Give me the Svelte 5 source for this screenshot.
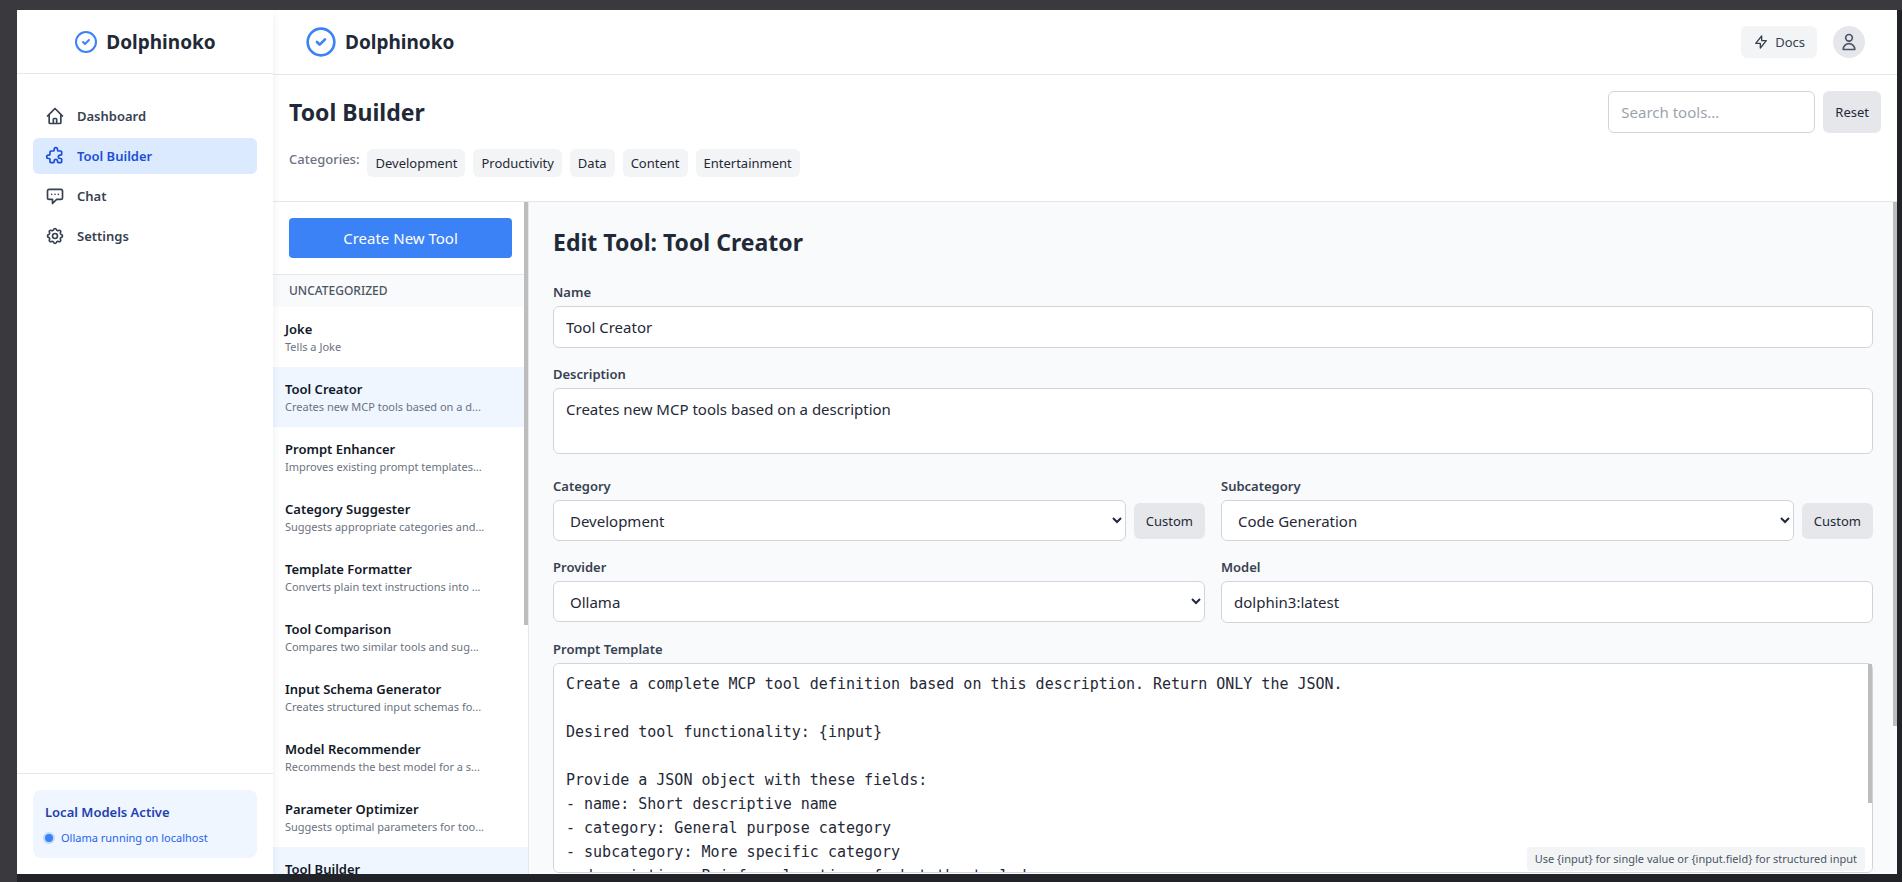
<script>
  const navItems = [
    { label: 'Dashboard', icon: 'home' },
    { label: 'Tool Builder', icon: 'puzzle' },
    { label: 'Chat', icon: 'chat' },
    { label: 'Settings', icon: 'gear' },
  ];
  const categories = ['Development', 'Productivity', 'Data', 'Content', 'Entertainment'];
  const tools = [
    { name: 'Joke', summary: 'Tells a Joke' },
    { name: 'Tool Creator', summary: 'Creates new MCP tools based on a d...' },
    { name: 'Prompt Enhancer', summary: 'Improves existing prompt templates...' },
    { name: 'Category Suggester', summary: 'Suggests appropriate categories and...' },
    { name: 'Template Formatter', summary: 'Converts plain text instructions into ...' },
    { name: 'Tool Comparison', summary: 'Compares two similar tools and sug...' },
    { name: 'Input Schema Generator', summary: 'Creates structured input schemas fo...' },
    { name: 'Model Recommender', summary: 'Recommends the best model for a s...' },
    { name: 'Parameter Optimizer', summary: 'Suggests optimal parameters for too...' },
    { name: 'Tool Builder', summary: '' },
  ];
  let activeNav = $state('Tool Builder');
  let selected = $state('Tool Creator');
  let search = $state('');
  let name = $state('Tool Creator');
  let description = $state('Creates new MCP tools based on a description');
  let category = $state('Development');
  let subcategory = $state('Code Generation');
  let provider = $state('Ollama');
  let model = $state('dolphin3:latest');
  let prompt = $state(
    'Create a complete MCP tool definition based on this description. Return ONLY the JSON.\n\nDesired tool functionality: {input}\n\nProvide a JSON object with these fields:\n- name: Short descriptive name\n- category: General purpose category\n- subcategory: More specific category\n- description: Brief explanation of what the tool does'
  );
  const hint = 'Use {input} for single value or {input.field} for structured input';
</script>

{#snippet mark(size)}
  <svg class="mark" width={size} height={size} viewBox="0 0 24 24" aria-hidden="true">
    <circle cx="12" cy="12" r="10" />
    <path d="M9 12l2 2 4-4" />
  </svg>
{/snippet}

<div class="desktop">
  <div class="window">
    <aside class="sidebar">
      <div class="side-brand">{@render mark(24)}<span>Dolphinoko</span></div>
      <nav>
        {#each navItems as item}
          <a href="#{item.icon}" class:active={activeNav === item.label} onclick={() => (activeNav = item.label)}>
            <svg class="icon" width="20" height="20" viewBox="0 0 24 24" aria-hidden="true">
              {#if item.icon === 'home'}
                <path d="M3 12l2-2m0 0l7-7 7 7M5 10v10a1 1 0 001 1h3m10-11l2 2m-2-2v10a1 1 0 01-1 1h-3m-6 0a1 1 0 001-1v-4a1 1 0 011-1h2a1 1 0 011 1v4a1 1 0 001 1m-6 0h6" />
              {:else if item.icon === 'puzzle'}
                <path d="M11 4a2 2 0 114 0v1a1 1 0 001 1h3a1 1 0 011 1v3a1 1 0 01-1 1h-1a2 2 0 100 4h1a1 1 0 011 1v3a1 1 0 01-1 1h-3a1 1 0 01-1-1v-1a2 2 0 10-4 0v1a1 1 0 01-1 1H7a1 1 0 01-1-1v-3a1 1 0 00-1-1H4a2 2 0 110-4h1a1 1 0 001-1V7a1 1 0 011-1h3a1 1 0 001-1V4z" />
              {:else if item.icon === 'chat'}
                <path d="M8 10h.01M12 10h.01M16 10h.01M9 16H5a2 2 0 01-2-2V6a2 2 0 012-2h14a2 2 0 012 2v8a2 2 0 01-2 2h-5l-5 5v-5z" />
              {:else}
                <path d="M10.325 4.317c.426-1.756 2.924-1.756 3.35 0a1.724 1.724 0 002.573 1.066c1.543-.94 3.31.826 2.37 2.37a1.724 1.724 0 001.065 2.572c1.756.426 1.756 2.924 0 3.35a1.724 1.724 0 00-1.066 2.573c.94 1.543-.826 3.31-2.37 2.37a1.724 1.724 0 00-2.572 1.065c-.426 1.756-2.924 1.756-3.35 0a1.724 1.724 0 00-2.573-1.066c-1.543.94-3.31-.826-2.37-2.37a1.724 1.724 0 00-1.065-2.572c-1.756-.426-1.756-2.924 0-3.35a1.724 1.724 0 001.066-2.573c-.94-1.543.826-3.31 2.37-2.37.996.608 2.296.07 2.572-1.065z" />
                <path d="M15 12a3 3 0 11-6 0 3 3 0 016 0z" />
              {/if}
            </svg>
            {item.label}
          </a>
        {/each}
      </nav>
      <div class="side-foot">
        <div class="status">
          <strong>Local Models Active</strong>
          <div class="status-row"><span class="dot"></span>Ollama running on localhost</div>
        </div>
      </div>
    </aside>

    <div class="main">
      <header class="topbar">
        <div class="brand">{@render mark(32)}<span>Dolphinoko</span></div>
        <div class="top-actions">
          <button class="docs">
            <svg class="icon" width="16" height="16" viewBox="0 0 24 24" aria-hidden="true"><path d="M13 10V3L4 14h7v7l9-11h-7z" /></svg>
            Docs
          </button>
          <button class="avatar" aria-label="Account">
            <svg class="icon" width="20" height="20" viewBox="0 0 24 24" aria-hidden="true"><path d="M16 7a4 4 0 11-8 0 4 4 0 018 0zM12 14a7 7 0 00-7 7h14a7 7 0 00-7-7z" /></svg>
          </button>
        </div>
      </header>

      <section class="page-head">
        <div class="title-row">
          <h1>Tool Builder</h1>
          <div class="search">
            <input type="text" placeholder="Search tools..." aria-label="Search tools" bind:value={search} />
            <button class="grey" onclick={() => (search = '')}>Reset</button>
          </div>
        </div>
        <div class="categories">
          <span>Categories:</span>
          {#each categories as item}<button>{item}</button>{/each}
        </div>
      </section>

      <div class="work">
        <div class="list-pane">
          <div class="list-scroll">
            <div class="create"><button>Create New Tool</button></div>
            <h2>UNCATEGORIZED</h2>
            <ul>
              {#each tools as tool, i}
                <li>
                  <button class:selected={selected === tool.name} class:tinted={i === tools.length - 1} onclick={() => (selected = tool.name)}>
                    <span class="tool-name">{tool.name}</span>
                    <span class="tool-summary">{tool.summary}</span>
                  </button>
                </li>
              {/each}
            </ul>
          </div>
          <div class="thumb list-thumb"></div>
        </div>

        <div class="editor">
          <form class="form">
            <h1>Edit Tool: Tool Creator</h1>
            <div class="field">
              <label for="name">Name</label>
              <input id="name" type="text" bind:value={name} />
            </div>
            <div class="field area">
              <label for="description">Description</label>
              <textarea id="description" rows="2" bind:value={description}></textarea>
            </div>
            <div class="columns">
              <div class="field">
                <label for="category">Category</label>
                <div class="with-button">
                  <select id="category" bind:value={category}><option>Development</option></select>
                  <button type="button" class="grey">Custom</button>
                </div>
              </div>
              <div class="field">
                <label for="subcategory">Subcategory</label>
                <div class="with-button">
                  <select id="subcategory" bind:value={subcategory}><option>Code Generation</option></select>
                  <button type="button" class="grey">Custom</button>
                </div>
              </div>
            </div>
            <div class="columns">
              <div class="field">
                <label for="provider">Provider</label>
                <select id="provider" bind:value={provider}><option>Ollama</option></select>
              </div>
              <div class="field">
                <label for="model">Model</label>
                <input id="model" type="text" bind:value={model} />
              </div>
            </div>
            <div class="field">
              <label for="prompt">Prompt Template</label>
              <div class="prompt-box">
                <textarea id="prompt" class="mono" rows="8" bind:value={prompt}></textarea>
                <div class="thumb prompt-thumb"></div>
                <div class="hint">{hint}</div>
              </div>
            </div>
          </form>
          <div class="thumb editor-thumb"></div>
        </div>
      </div>
    </div>
  </div>
</div>

<style>
  :global(body) {
    margin: 0;
    background: #212328;
  }
  .desktop, .desktop * {
    box-sizing: border-box;
  }
  .desktop {
    height: 100vh;
    padding: 10px 5px 8px 17px;
    background: linear-gradient(#3a393e, #3a393e) top / 100% 10px no-repeat,
      linear-gradient(#3a393e, #3a393e) left / 17px 100% no-repeat, #212328;
    font-family: 'Noto Sans', 'Open Sans', sans-serif;
    font-size: 15px;
    line-height: 24px;
    color: #1f2937;
  }
  .window {
    display: flex;
    height: 100%;
    overflow: hidden;
    background: #f9fafb;
  }
  h1, h2, ul {
    margin: 0;
    padding: 0;
  }
  h1 {
    font-size: 23px;
    line-height: 32px;
    font-weight: 700;
  }
  button, input, select, textarea {
    margin: 0;
    font: inherit;
    color: inherit;
  }
  button {
    border: 0;
    cursor: pointer;
  }
  .icon, .mark {
    flex: none;
    fill: none;
    stroke: currentColor;
    stroke-width: 2;
    stroke-linecap: round;
    stroke-linejoin: round;
  }
  .mark {
    color: #3b82f6;
  }

  .sidebar {
    position: relative;
    z-index: 1;
    display: flex;
    flex-direction: column;
    flex: 0 0 256px;
    background: #fff;
    box-shadow: 2px 4px 8px rgba(0, 0, 0, 0.05);
  }
  .side-brand, .brand {
    display: flex;
    align-items: center;
    gap: 8px;
    font-size: 19px;
    line-height: 28px;
    font-weight: 700;
  }
  .side-brand {
    justify-content: center;
    height: 64px;
    border-bottom: 1px solid #e5e7eb;
  }
  nav {
    display: flex;
    flex: 1;
    flex-direction: column;
    gap: 4px;
    padding: 24px 16px;
  }
  nav a {
    display: flex;
    align-items: center;
    gap: 12px;
    padding: 8px 12px;
    border-radius: 6px;
    font-size: 13px;
    line-height: 20px;
    font-weight: 600;
    color: #374151;
    text-decoration: none;
  }
  nav a.active {
    background: #dbeafe;
    color: #1d4ed8;
  }
  .side-foot {
    padding: 16px;
    border-top: 1px solid #e5e7eb;
  }
  .status {
    display: grid;
    gap: 8px;
    padding: 12px;
    border-radius: 8px;
    background: #eff6ff;
    color: #1e40af;
  }
  .status strong {
    font-size: 13px;
    line-height: 20px;
    font-weight: 600;
  }
  .status-row {
    display: flex;
    align-items: center;
    gap: 8px;
    font-size: 11px;
    line-height: 16px;
    color: #2563eb;
  }
  .dot {
    width: 8px;
    height: 8px;
    border-radius: 50%;
    background: #3b82f6;
    box-shadow: 0 0 0 2px #bfdbfe;
  }

  .main {
    display: flex;
    flex: 1;
    flex-direction: column;
    min-width: 0;
  }
  .topbar {
    display: flex;
    align-items: center;
    justify-content: space-between;
    padding: 16px 32px;
    border-bottom: 1px solid #e5e7eb;
    background: #fff;
  }
  .top-actions {
    display: flex;
    gap: 16px;
  }
  .docs {
    display: flex;
    align-items: center;
    gap: 6px;
    padding: 6px 12px;
    border-radius: 6px;
    background: #f3f4f6;
    font-size: 13px;
    line-height: 20px;
    color: #374151;
  }
  .avatar {
    display: grid;
    place-items: center;
    width: 32px;
    height: 32px;
    padding: 0;
    border-radius: 50%;
    background: #e5e7eb;
    color: #4b5563;
  }
  .page-head {
    padding: 16px 16px 24px;
    border-bottom: 1px solid #e5e7eb;
    background: #fff;
  }
  .title-row {
    display: flex;
    align-items: center;
    justify-content: space-between;
    margin-bottom: 16px;
  }
  .search {
    display: flex;
    gap: 8px;
  }
  input, select, textarea {
    display: block;
    width: 100%;
    border: 1px solid #d1d5db;
    border-radius: 6px;
    background: #fff;
  }
  input {
    height: 42px;
    padding: 8px 12px;
  }
  .search input {
    width: 207px;
  }
  input::placeholder {
    color: #9ca3af;
  }
  .grey {
    padding: 8px 12px;
    border-radius: 6px;
    background: #e5e7eb;
    font-size: 13px;
    line-height: 20px;
  }
  .categories {
    display: flex;
    gap: 8px;
    font-size: 13px;
    line-height: 20px;
  }
  .categories span {
    font-weight: 500;
    color: #6b7280;
  }
  .categories button {
    padding: 4px 8px;
    border-radius: 6px;
    background: #f3f4f6;
  }

  .work {
    display: flex;
    flex: 1;
    min-height: 0;
  }
  .list-pane {
    position: relative;
    flex: 0 0 256px;
    border-right: 1px solid #e5e7eb;
    background: #fff;
  }
  .list-scroll {
    height: 100%;
    overflow-y: auto;
    scrollbar-width: none;
  }
  .create {
    padding: 16px;
    border-bottom: 1px solid #e5e7eb;
  }
  .create button {
    width: 100%;
    padding: 8px 16px;
    border-radius: 4px;
    background: #3b82f6;
    color: #fff;
  }
  h2 {
    padding: 8px 16px;
    background: #f9fafb;
    font-size: 12px;
    line-height: 16px;
    font-weight: 500;
    color: #4b5563;
  }
  ul {
    list-style: none;
  }
  li button {
    display: block;
    width: 100%;
    min-height: 60px;
    padding: 12px;
    background: #fff;
    text-align: left;
  }
  li button.selected, li button.tinted {
    background: #eff6ff;
  }
  .tool-name, .tool-summary {
    display: block;
    white-space: nowrap;
  }
  .tool-name {
    font-size: 13px;
    line-height: 20px;
    font-weight: 600;
    color: #111827;
  }
  .tool-summary {
    min-height: 16px;
    font-size: 11px;
    line-height: 16px;
    color: #6b7280;
  }
  .thumb {
    position: absolute;
    top: 0;
    right: 0;
    width: 4px;
    background: #bdbdbd;
  }
  .list-thumb {
    height: 63%;
  }
  .editor {
    position: relative;
    flex: 1;
    min-width: 0;
  }
  .editor-thumb {
    height: 78%;
  }
  .form {
    display: flex;
    flex-direction: column;
    gap: 16px;
    height: 100%;
    padding: 24px;
    overflow-y: auto;
    scrollbar-width: none;
  }
  .form h1 {
    margin-bottom: 8px;
  }
  .field {
    display: flex;
    flex-direction: column;
    gap: 4px;
    min-width: 0;
  }
  .field.area {
    padding-bottom: 6px;
  }
  label {
    font-size: 13px;
    line-height: 20px;
    font-weight: 600;
    color: #374151;
  }
  textarea {
    padding: 8px 12px;
    resize: none;
    scrollbar-width: none;
  }
  select {
    height: 41px;
    padding: 8px 12px;
  }
  .columns {
    display: grid;
    grid-template-columns: 1fr 1fr;
    gap: 16px;
    align-items: start;
  }
  .with-button {
    display: flex;
    align-items: center;
    gap: 8px;
  }
  .with-button select {
    flex: 1;
    min-width: 0;
  }
  .prompt-box {
    position: relative;
    padding-bottom: 6px;
  }
  .mono {
    font-family: 'DejaVu Sans Mono', monospace;
  }
  .prompt-thumb {
    top: 1px;
    right: 1px;
    height: 139px;
  }
  .hint {
    position: absolute;
    right: 8px;
    bottom: 8px;
    padding: 4px 8px;
    border-radius: 4px;
    background: #f3f4f6;
    font-size: 11px;
    line-height: 16px;
    color: #4b5563;
  }
</style>
